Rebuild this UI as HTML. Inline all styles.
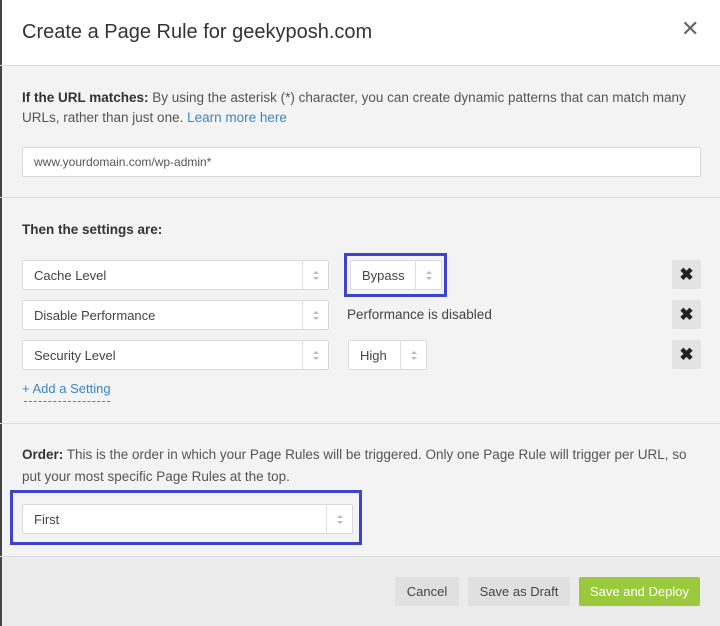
<!DOCTYPE html>
<html><head><style>
*{box-sizing:border-box;margin:0;padding:0}
body{width:720px;height:626px;position:relative;font-family:"Liberation Sans",sans-serif;color:#333;background:#f3f3f3;overflow:hidden}
.a{position:absolute}
.sel{position:absolute;background:#fff;border:1px solid #d9d9d9;border-radius:2px;font-size:13px;color:#444;padding-left:11px;display:flex;align-items:center}
.sel .d{position:absolute;top:0;bottom:0;border-left:1px solid #ddd;width:26px;right:0}
.sel .d:before{content:"";position:absolute;left:10px;top:10px;border:3px solid transparent;border-bottom:3px solid #bbb;border-top:0}
.sel .d:after{content:"";position:absolute;left:10px;top:16px;border:3px solid transparent;border-top:3px solid #bbb;border-bottom:0}
.x{position:absolute;left:672px;width:29px;height:29px;background:#e3e3e3;border-radius:2px;font-size:17px;font-weight:bold;text-align:center;line-height:29px;color:#222}
.btn{position:absolute;top:577px;height:29px;background:#e0e0e0;border-radius:2px;font-size:13px;color:#444;text-align:center;line-height:29px}
.hl{position:absolute;left:0;right:0;height:1px;background:#dcdcdc}
</style></head><body>
<div class="a" style="left:0;top:0;width:720px;height:65px;background:#fff"></div>
<div class="a" style="left:0;top:0;width:2px;height:626px;background:#444"></div>
<div class="a" style="left:22px;top:21px;font-size:20px;color:#333">Create a Page Rule for geekyposh.com</div>
<div class="a" style="left:681px;top:16px;font-size:22px;color:#666">✕</div>
<div class="hl" style="top:65px"></div>
<div class="a" style="left:22px;top:88px;width:668px;font-size:13.5px;line-height:20px;color:#555"><b style="color:#333">If the URL matches:</b> By using the asterisk (*) character, you can create dynamic patterns that can match many URLs, rather than just one. <span style="color:#3c85c5">Learn more here</span></div>
<div class="sel" style="left:22px;top:147px;width:679px;height:30px;font-size:12px;color:#555">www.yourdomain.com/wp-admin*</div>
<div class="hl" style="top:197px"></div>
<div class="a" style="left:22px;top:222px;font-size:13.5px;font-weight:bold">Then the settings are:</div>
<div class="sel" style="left:22px;top:260px;width:307px;height:30px">Cache Level<div class="d"></div></div>
<div class="a" style="left:344px;top:253px;width:103px;height:44px;border:3px solid #3d44cc"></div>
<div class="sel" style="left:350px;top:260px;width:92px;height:30px">Bypass<div class="d"></div></div>
<div class="x" style="top:260px">✖</div>
<div class="sel" style="left:22px;top:300px;width:307px;height:30px">Disable Performance<div class="d"></div></div>
<div class="a" style="left:347px;top:307px;font-size:13.5px;color:#444">Performance is disabled</div>
<div class="x" style="top:300px">✖</div>
<div class="sel" style="left:22px;top:340px;width:307px;height:30px">Security Level<div class="d"></div></div>
<div class="sel" style="left:348px;top:340px;width:79px;height:30px">High<div class="d"></div></div>
<div class="x" style="top:340px">✖</div>
<div class="a" style="left:22px;top:381px;font-size:13px;color:#3c85c5">+ Add a Setting</div>
<div class="a" style="left:24px;top:401px;width:86px;border-top:1px dashed #3c85c5"></div>
<div class="hl" style="top:423px"></div>
<div class="a" style="left:22px;top:444px;width:672px;font-size:13.5px;line-height:22px;color:#555"><b style="color:#333">Order:</b> This is the order in which your Page Rules will be triggered. Only one Page Rule will trigger per URL, so put your most specific Page Rules at the top.</div>
<div class="a" style="left:10px;top:490px;width:352px;height:55px;border:3px solid #3d44cc"></div>
<div class="sel" style="left:22px;top:504px;width:331px;height:30px">First<div class="d"></div></div>
<div class="a" style="left:0;top:556px;width:720px;height:70px;background:#ebebeb"></div>
<div class="a" style="left:0;top:556px;width:2px;height:70px;background:#444"></div>
<div class="hl" style="top:556px"></div>
<div class="btn" style="left:395px;width:64px">Cancel</div>
<div class="btn" style="left:468px;width:102px">Save as Draft</div>
<div class="btn" style="left:579px;width:121px;background:#9bc93e;color:#fff">Save and Deploy</div>
</body></html>
